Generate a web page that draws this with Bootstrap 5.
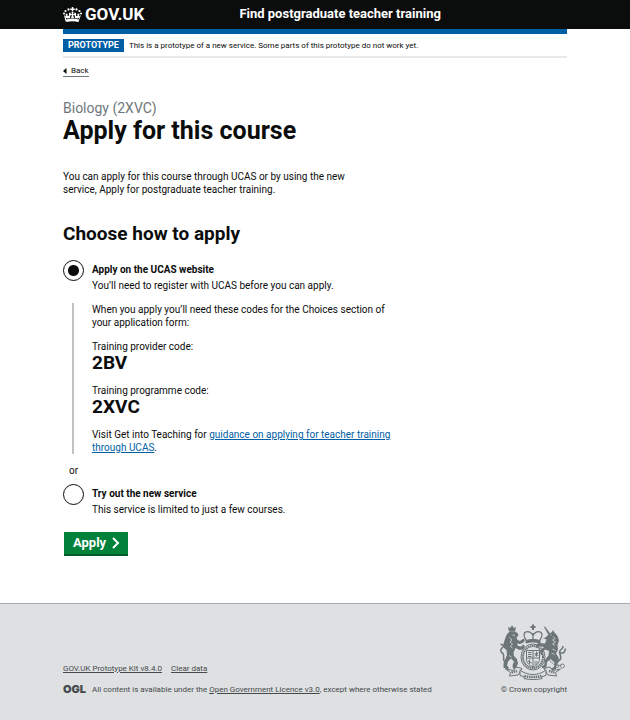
<!DOCTYPE html>
<html lang="en">
<head>
<meta charset="utf-8">
<meta name="viewport" content="width=device-width, initial-scale=1">
<title>Apply for this course - Find postgraduate teacher training</title>
<link href="https://cdn.jsdelivr.net/npm/bootstrap@5.3.0/dist/css/bootstrap.min.css" rel="stylesheet">
<style>
body { font-family: Roboto, "Liberation Sans", sans-serif; font-size: 10px; line-height: 13px; color: #0b0c0c; background: #fff; }
a { color: #005ea5; text-underline-offset: 1px; }
.page-width { width: 100%; max-width: 504px; margin: 0 auto; }
.site-header { background: #0b0c0c; }
.site-header a { color: #fff; text-decoration: none; font-weight: 700; line-height: 28px; padding-bottom: 1px; }
.brand { flex: 0 0 35%; font-size: 17px; gap: 3px; }
.service-name { font-size: 13px; }
.blue-bar { height: 5px; background: #005ea5; }
.phase { font-size: 8px; padding: 5px 0 4px; border-bottom: 2px solid #e6e8e9; gap: 5px; }
.phase-tag { background: #005ea5; color: #fff; font-size: 9px; font-weight: 700; line-height: 13px; padding: 0 5px; }
.back { font-size: 8px; line-height: 11px; color: #0b0c0c; text-decoration: none; border-bottom: 1px solid #6f777b; gap: 4px; margin-top: 7px; }
.caption { font-size: 14px; line-height: 16px; color: #6f777b; margin-top: 23px; }
h1 { font-size: 25px; line-height: 27px; font-weight: 700; margin: 1px 0 26px; }
h2 { font-size: 19px; line-height: 24px; font-weight: 700; margin: 26px 0 14px; }
.intro { max-width: 290px; }
.choice { gap: 8px; }
.choice input { appearance: none; flex: none; width: 21px; height: 21px; margin: 0; border: 1px solid #0b0c0c; border-radius: 50%; background: #fff; }
.choice input:checked { background: radial-gradient(circle, #0b0c0c 5px, #fff 6px); }
.choice label { font-weight: 700; line-height: 13px; margin: 3px 0; }
.details { border-left: 2px solid #bfc1c3; margin: 11px 0 10px 9px; padding-left: 18px; max-width: 328px; }
.details p { margin-bottom: 11px; }
.details p:last-child { margin-bottom: 0; }
.code { display: block; font-size: 19px; line-height: 20px; }
.or { margin: 0 0 7px 6px; }
.apply { background: #00823b; color: #fff; font-size: 13px; line-height: 22px; font-weight: 700; border: 0; border-bottom: 2px solid #005a29; border-radius: 0; padding: 0 8px 0 9px; gap: 6px; margin: 16px 0 47px 1px; }
.site-footer { background: #dee0e2; border-top: 1px solid #a1acb2; font-size: 8px; line-height: 11px; color: #454a4c; padding: 20px 0 26px; }
.site-footer a { color: #454a4c; }
.meta-links { gap: 9px; margin-bottom: 10px; }
.licence { gap: 6px; }
.ogl { font-family: Inter, sans-serif; font-weight: 900; font-size: 11px; }
.site-footer .crown-copy { text-decoration: none; }
</style>
<script src="https://cdn.jsdelivr.net/npm/bootstrap@5.3.0/dist/js/bootstrap.bundle.min.js"></script>
</head>
<body class="d-flex flex-column min-vh-100">
<header class="site-header">
  <div class="page-width d-flex">
    <a class="brand d-flex align-items-center" href="#">
      <svg width="19" height="15" viewBox="0 0 38 30" fill="#fff" aria-hidden="true">
        <path d="M17.5 0h3v3h3v3h-3v3h-3V6h-3V3h3z"/>
        <circle cx="11" cy="5" r="2.3"/><circle cx="27" cy="5" r="2.3"/><circle cx="5" cy="8" r="2.2"/><circle cx="33" cy="8" r="2.2"/><circle cx="2" cy="13" r="2"/><circle cx="36" cy="13" r="2"/>
        <path d="M17 10h4l-1 5 4-3v5l-4-1 2 6h-6l2-6-4 1v-5l4 3zM2 16l4 3-1-6 5 1-2 3 4 1 0-6 3-1-1 11-5 1-4-2 2 4c8-3 16-3 24 0l2-4-4 2-5-1-1-11 3 1v6l4-1-2-3 5-1-1 6 4-3-5 13c-8-3-18-3-26 0z"/>
        <path d="M7 27c8-2 16-2 24 0v3c-8-2-16-2-24 0z"/>
      </svg>
      <span>GOV.UK</span>
    </a>
    <a class="service-name" href="#">Find postgraduate teacher training</a>
  </div>
</header>
<div class="page-width">
  <div class="blue-bar"></div>
  <div class="phase d-flex align-items-center">
    <strong class="phase-tag">PROTOTYPE</strong>
    <span>This is a prototype of a new service. Some parts of this prototype do not work yet.</span>
  </div>
  <a class="back d-inline-flex align-items-center" href="#">
    <svg width="4" height="6" viewBox="0 0 4 6" aria-hidden="true"><path d="M0 3 3.500 0v6z" fill="#0b0c0c"/></svg>Back</a>
</div>
<main class="page-width flex-grow-1">
  <div class="caption">Biology (2XVC)</div>
  <h1>Apply for this course</h1>
  <p class="intro mb-0">You can apply for this course through UCAS or by using the new service, Apply for postgraduate teacher training.</p>
  <form>
    <h2 id="choose">Choose how to apply</h2>
    <div role="radiogroup" aria-labelledby="choose">
      <div class="choice d-flex">
        <input type="radio" name="how" id="ucas" aria-describedby="ucas-hint" checked>
        <div><label class="d-block" for="ucas">Apply on the UCAS website</label><div id="ucas-hint">You’ll need to register with UCAS before you can apply.</div></div>
      </div>
      <div class="details">
        <p>When you apply you’ll need these codes for the Choices section of your application form:</p>
        <p>Training provider code: <strong class="code">2BV</strong></p>
        <p>Training programme code: <strong class="code">2XVC</strong></p>
        <p>Visit Get into Teaching for <a href="#">guidance on applying for teacher training through UCAS</a>.</p>
      </div>
      <p class="or">or</p>
      <div class="choice d-flex">
        <input type="radio" name="how" id="new" aria-describedby="new-hint">
        <div><label class="d-block" for="new">Try out the new service</label><div id="new-hint">This service is limited to just a few courses.</div></div>
      </div>
    </div>
    <button class="apply btn d-inline-flex align-items-center" type="button">Apply
      <svg width="8" height="12" viewBox="0 0 8 12" fill="none" stroke="#fff" stroke-width="2" aria-hidden="true"><path d="m1 1 5 5-5 5"/></svg>
    </button>
  </form>
</main>
<footer class="site-footer">
  <div class="page-width d-flex justify-content-between align-items-end">
    <div>
      <div class="meta-links d-flex"><a href="#">GOV.UK Prototype Kit v8.4.0</a><a href="#">Clear data</a></div>
      <div class="licence d-flex align-items-center"><span class="ogl">OGL</span><span>All content is available under the <a href="#">Open Government Licence v3.0</a>, except where otherwise stated</span></div>
    </div>
    <a class="crown-copy d-flex flex-column align-items-end" href="#">
      <svg class="mb-1" width="68" height="56" viewBox="0 0 136 112" fill="none" stroke="#6c7577" stroke-width="2" aria-hidden="true">
        <!-- crown -->
        <path fill="#6c7577" stroke="none" d="M66 1h4v3h3v4h-3v4h-4V8h-3V4h3z"/>
        <path d="M55 33c-9-12-4-18 2-18 6 0 9 4 11 8 2-4 5-8 11-8 6 0 11 6 2 18M68 18v14" stroke-width="2.500"/>
        <path d="M54 33c10-3 18-3 28 0v5c-10-3-18-3-28 0z" fill="#6c7577"/>
        <!-- garter and quartered shield -->
        <ellipse cx="68" cy="66" rx="24" ry="26" stroke-width="2"/>
        <ellipse cx="68" cy="66" rx="20" ry="22" stroke-width="4" stroke-dasharray="3 1"/>
        <path d="M55 53h26v17c0 8-5 12-13 16-8-4-13-8-13-16z" stroke-width="2"/>
        <path d="M68 53v33M55 68h26M58 57h7M58 61h7M58 65h7M71 76h7M71 80h5M75 55v10M71 59l8 4M79 57l-8 7M61 71v9M58 74l7 4" stroke-width="2"/>
        <!-- lion -->
        <g fill="#6c7577" stroke="none">
          <path d="M18 6l4 2 4-5 4 5 4-2-2 9H20z"/>
          <path d="M18 18l4-3h10l5 3 2 5-4 4 2 5 5 2 7-5 3 3-3 5-7 3-6-1 2 5 7 1 3-4 4 3-4 7-7 1-8-4-4 9 1 7 6 6 2 9-3 6 5 4-3 3-9-3-1-6 3-8-6-6-6 6-2 8 4 5-3 3-8-4 0-8 4-10 3-7-1-10-5-4-1-9 3-9 3-8z"/>
        </g>
        <path d="M14 77c-9-3-2-12-6-18-5-3-7-7-1-12 4-2 2-7-4-6" stroke-width="3"/>
        <path d="M27 22l5 1M21 27l5 5-4 4 5 4-4 5 4 3M20 63l5 3" stroke="#dee0e2" stroke-width="1.500"/>
        <!-- unicorn -->
        <g fill="#6c7577" stroke="none">
          <path d="M90 6l2-1 11 15-4 2z"/>
          <path d="M94 26l6-6 6-4 2-4 3 5 6 7 3 9-3 8 1 10-4 8 5 8 1 8-5 7-1 8-9 3-1-4 6-3 1-9-8-7-7 6-1 10-7 3-3-3 6-5 0-8 8-10 1-9-8-3-5 6 1 6-5-2-1-7 8-8-10-2-4 4-3-3 5-7 14 1 3-8-6-2-4 3z"/>
        </g>
        <path d="M117 74c10-1 6-12 4-17-1-6 8-6 7-13M122 57c8 4 10-3 11-8" stroke-width="3"/>
        <path d="M103 21l2 1M108 25l4 4-5 3 6 4-6 4 5 3M107 50l6 3M105 58l6 3" stroke="#dee0e2" stroke-width="1.500"/>
        <path d="M98 68c10 16 22 18 29 12M112 84a4 3 0 1 0 8 0 4 3 0 1 0-8 0M123 84a4 4 0 1 0 8 0 4 4 0 1 0-8 0" stroke-width="1.500"/>
        <!-- motto scroll -->
        <path d="M13 90l16 3 5-7 12 3-8 13-17 2 2-7zM123 90l-16 3-5-7-12 3 8 13 17 2-2-7z" fill="#dee0e2" stroke-width="2"/>
        <path d="M42 92c15 12 37 12 52 0v11l-8 2v4c-12 3-24 3-36 0v-4l-8-2z" fill="#dee0e2" stroke-width="2"/>
        <path d="M51 104c12 3 22 3 34 0M25 97l11-3M100 94l11 3" stroke-width="5" stroke-dasharray="3 1.500"/>
      </svg>
      <span>© Crown copyright</span>
    </a>
  </div>
</footer>
</body>
</html>
